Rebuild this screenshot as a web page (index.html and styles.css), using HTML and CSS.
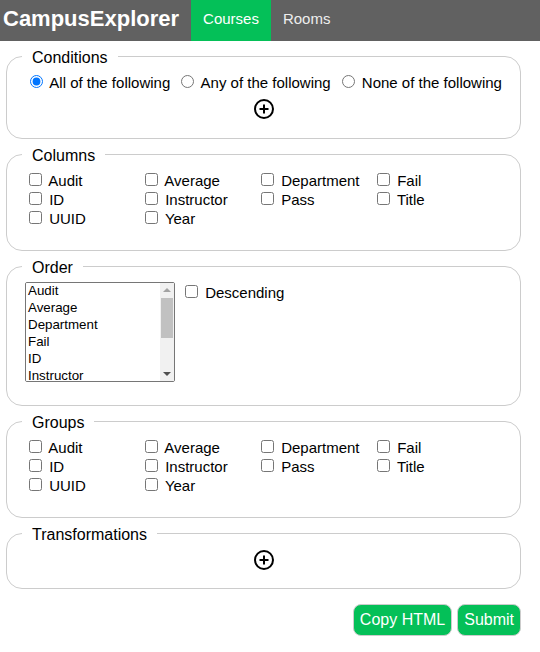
FILE: index.html
```html
<!DOCTYPE html>
<html lang="en">
<head>
  <meta charset="UTF-8">
  <title>CampusExplorer</title>
  <link rel="stylesheet" href="styles.css">
</head>

<body>

  <nav class="navbar">
    <span class="brand">CampusExplorer</span>
    <a class="nav-tab active">Courses</a>
    <a class="nav-tab">Rooms</a>
  </nav>

  <form class="query-form" onsubmit="return false">

    <fieldset class="panel conditions">
      <legend>Conditions</legend>
      <div class="condition-types">
        <label><input type="radio" name="match" checked> All of the following</label>
        <label><input type="radio" name="match"> Any of the following</label>
        <label><input type="radio" name="match"> None of the following</label>
      </div>
      <button type="button" class="add-btn" aria-label="Add condition">
        <svg width="22" height="22" viewBox="0 0 22 22"><circle cx="11" cy="11" r="9" fill="none" stroke="#000" stroke-width="2"/><path d="M11 6.5v9M6.5 11h9" stroke="#000" stroke-width="2"/></svg>
      </button>
    </fieldset>

    <fieldset class="panel columns">
      <legend>Columns</legend>
      <div class="field-grid">
        <label><input type="checkbox"> Audit</label>
        <label><input type="checkbox"> Average</label>
        <label><input type="checkbox"> Department</label>
        <label><input type="checkbox"> Fail</label>
        <label><input type="checkbox"> ID</label>
        <label><input type="checkbox"> Instructor</label>
        <label><input type="checkbox"> Pass</label>
        <label><input type="checkbox"> Title</label>
        <label><input type="checkbox"> UUID</label>
        <label><input type="checkbox"> Year</label>
      </div>
    </fieldset>

    <fieldset class="panel order">
      <legend>Order</legend>
      <div class="order-row">
        <div class="list-wrap">
          <select class="order-list" size="6" multiple>
            <option>Audit</option>
            <option>Average</option>
            <option>Department</option>
            <option>Fail</option>
            <option>ID</option>
            <option>Instructor</option>
            <option>Pass</option>
            <option>Title</option>
            <option>UUID</option>
            <option>Year</option>
          </select>
          <!-- headless chrome hides the native scrollbar, so it is drawn over the list -->
          <div class="list-scrollbar">
            <span class="arrow-up"></span>
            <span class="thumb"></span>
            <span class="arrow-down"></span>
          </div>
        </div>
        <label class="descending"><input type="checkbox"> Descending</label>
      </div>
    </fieldset>

    <fieldset class="panel groups">
      <legend>Groups</legend>
      <div class="field-grid">
        <label><input type="checkbox"> Audit</label>
        <label><input type="checkbox"> Average</label>
        <label><input type="checkbox"> Department</label>
        <label><input type="checkbox"> Fail</label>
        <label><input type="checkbox"> ID</label>
        <label><input type="checkbox"> Instructor</label>
        <label><input type="checkbox"> Pass</label>
        <label><input type="checkbox"> Title</label>
        <label><input type="checkbox"> UUID</label>
        <label><input type="checkbox"> Year</label>
      </div>
    </fieldset>

    <fieldset class="panel transformations">
      <legend>Transformations</legend>
      <button type="button" class="add-btn" aria-label="Add transformation">
        <svg width="22" height="22" viewBox="0 0 22 22"><circle cx="11" cy="11" r="9" fill="none" stroke="#000" stroke-width="2"/><path d="M11 6.5v9M6.5 11h9" stroke="#000" stroke-width="2"/></svg>
      </button>
    </fieldset>

    <div class="actions">
      <button type="button" class="action-btn">Copy HTML</button>
      <button type="submit" class="action-btn">Submit</button>
    </div>

  </form>

</body>
</html>
```

FILE: styles.css
```css
body {
  margin: 0;
  font-family: "Liberation Sans", Arial, sans-serif;
  font-size: 15px;
  color: #000;
  background-color: #fff;
}

.navbar {
  display: flex;
  height: 41px;
  background-color: #616161;
  color: #fff;
}

.brand {
  padding: 0 12px 0 3px;
  font-size: 22px;
  font-weight: bold;
  line-height: 38px;
}

.nav-tab {
  padding: 0 12px;
  line-height: 38px;
  font-size: 15px;
  color: #eee;
}

.nav-tab.active {
  background-color: #04c058;
  color: #fff;
}

.query-form {
  width: 515px;
  margin: 4px 0 0 6px;
}

.panel {
  box-sizing: border-box;
  margin: 0 0 4px;
  padding: 0 18px;
  border: 1px solid #ccc;
  border-radius: 16px;
  min-width: 0;
}

.panel legend {
  margin-left: -3px;
  padding: 4px 10px 0;
  font-size: 16px;
}

.conditions {
  height: 94px;
}

.columns,
.groups {
  height: 108px;
}

.order {
  height: 151px;
}

.transformations {
  height: 67px;
}

.transformations .add-btn {
  margin-top: 5px;
}

input {
  margin: 0 3px 0 4px;
  vertical-align: 0;
}

.condition-types {
  display: flex;
  gap: 7px;
  margin: 6px 0 0 1px;
  line-height: 19px;
  white-space: nowrap;
}

.add-btn {
  display: block;
  margin: 6px auto 0;
  padding: 0;
  border: none;
  background: none;
  height: 22px;
}

.field-grid {
  display: grid;
  grid-template-columns: repeat(4, 116px);
  grid-auto-rows: 19px;
  line-height: 19px;
  margin-top: 6px;
}

.order-row {
  display: flex;
  align-items: flex-start;
  margin-top: 5px;
}

.list-wrap {
  position: relative;
  width: 150px;
  height: 100px;
  flex-shrink: 0;
}

.order-list {
  display: block;
  box-sizing: border-box;
  width: 150px;
  height: 100px;
  margin: 0;
  font-family: "Liberation Sans", Arial, sans-serif;
  font-size: 13.333px;
}

.list-scrollbar {
  position: absolute;
  top: 1px;
  right: 1px;
  bottom: 1px;
  width: 14px;
  background-color: #f1f1f1;
}

.thumb {
  position: absolute;
  top: 15px;
  left: 1px;
  width: 12px;
  height: 40px;
  background-color: #c1c1c1;
}

.arrow-up,
.arrow-down {
  position: absolute;
  left: 3px;
  width: 0;
  height: 0;
  border-left: 4px solid transparent;
  border-right: 4px solid transparent;
}

.arrow-up {
  top: 5px;
  border-bottom: 4px solid #a3a3a3;
}

.arrow-down {
  bottom: 5px;
  border-top: 4px solid #505050;
}

.descending {
  margin: 1px 0 0 6px;
  line-height: 19px;
}

.actions {
  display: flex;
  justify-content: flex-end;
  gap: 5px;
  margin-top: 15px;
}

.action-btn {
  height: 32px;
  padding: 0 6px;
  border: 1px solid #ccc;
  border-radius: 8px;
  background-color: #04c058;
  color: #fff;
  font-family: "Liberation Sans", Arial, sans-serif;
  font-size: 16px;
}
```
